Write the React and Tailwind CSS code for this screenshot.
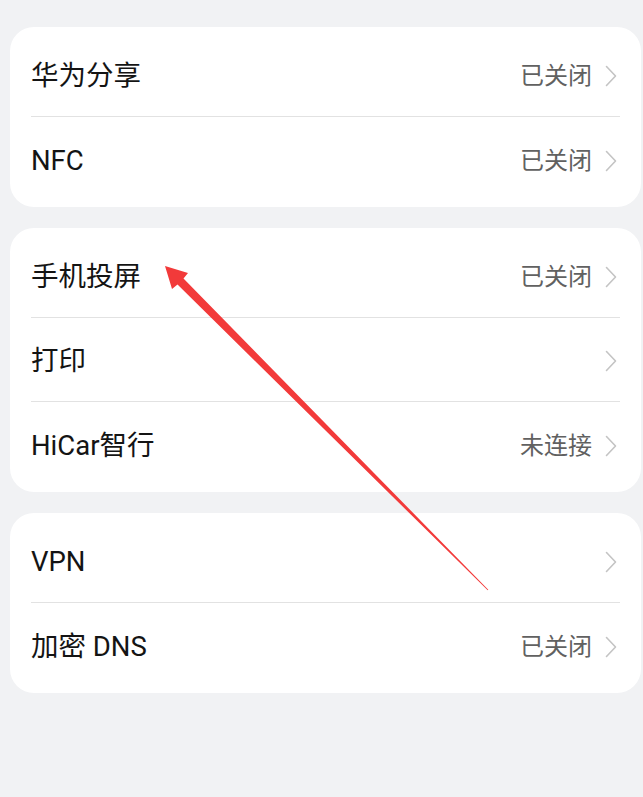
import React from 'react';

const groups = [
  [
    { label: '华为分享', value: '已关闭' },
    { label: 'NFC', value: '已关闭' },
  ],
  [
    { label: '手机投屏', value: '已关闭' },
    { label: '打印', value: '' },
    { label: 'HiCar智行', value: '未连接' },
  ],
  [
    { label: 'VPN', value: '' },
    { label: '加密 DNS', value: '已关闭' },
  ],
];

function Chevron() {
  return (
    <svg width="12" height="22" viewBox="0 0 12 22" className="shrink-0">
      <path d="M1.5 1.5 L10.5 11 L1.5 20.5" fill="none" stroke="#c4c4c4" strokeWidth="1.6" strokeLinecap="round" strokeLinejoin="round" />
    </svg>
  );
}

function Row({ label, value, last }) {
  return (
    <div className="flex h-[84px] flex-col">
      <div className="flex flex-1 items-center justify-between pl-[21px] pr-[24px] pt-[3px]">
        <span className="text-[27.5px] text-[#141414]">{label}</span>
        <div className="flex items-center gap-[13px]">
          {value ? <span className="text-[24px] text-[#616161]">{value}</span> : null}
          <Chevron />
        </div>
      </div>
      {!last ? <div className="mx-[21px] h-px bg-[#e2e2e2]" /> : null}
    </div>
  );
}

export default function App() {
  return (
    <div
      className="relative h-[797px] w-[643px] overflow-hidden bg-[#f1f2f4] pt-[27px]"
      style={{ fontFamily: 'Roboto, "Noto Sans CJK SC", sans-serif' }}
    >
      <div className="flex flex-col gap-[21px] pl-[10px] pr-[2px]">
        {groups.map((rows, i) => (
          <div key={i} className="rounded-[24px] bg-white py-[6px]">
            {rows.map((row, j) => (
              <Row key={row.label} {...row} last={j === rows.length - 1} />
            ))}
          </div>
        ))}
      </div>

      <svg className="pointer-events-none absolute left-0 top-0" width="643" height="797">
        <polygon
          points="165,266 188,273 183.5,278.6 488.3,589.7 487.7,590.3 177.5,284.6 172,289"
          fill="#f23a3a"
        />
      </svg>
    </div>
  );
}
